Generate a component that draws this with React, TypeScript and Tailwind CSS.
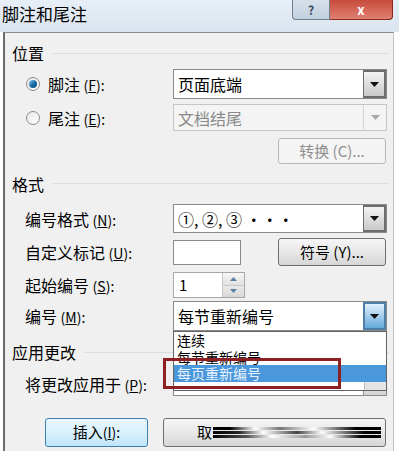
import React from "react";

const font = {
  fontFamily: '"Noto Sans CJK SC", "Noto Sans", sans-serif',
};

const Key = ({ k }: { k: string }) => (
  <span className="text-[14px]">
    (<span className="underline">{k}</span>):
  </span>
);

const Arrow = ({ disabled, dark }: { disabled?: boolean; dark?: boolean }) => (
  <div
    className={
      "flex h-full w-[23px] items-center justify-center border-l " +
      (disabled
        ? "border-[#d5d5d5] bg-[#f4f4f4]"
        : dark
        ? "border-[2px] border-[#6d6d6d] bg-gradient-to-b from-[#f4f4f4] to-[#c9c9c9]"
        : "border-[#9a9a9a] bg-gradient-to-b from-[#f2f2f2] to-[#d4d4d4]")
    }
  >
    <svg width="9" height="5" viewBox="0 0 9 5">
      <path d="M0 0h9L4.5 5z" fill={disabled ? "#a8a8a8" : "#111"} />
    </svg>
  </div>
);

const Select = ({
  value,
  disabled,
  dark,
  focus,
}: {
  value: string;
  disabled?: boolean;
  dark?: boolean;
  focus?: boolean;
}) => (
  <div
    className={
      "flex h-full w-[214px] items-stretch border " +
      (disabled ? "border-[#c5c5c5] bg-[#f4f4f4] text-[#8a8a8a]" : "border-[#8a8a8a] bg-white text-black")
    }
  >
    <div className="flex flex-1 items-center pl-[4px] text-[16px]">{value}</div>
    {focus ? (
      <div className="flex h-full w-[23px] items-center justify-center border-[2px] border-[#4f7fa6] bg-gradient-to-b from-[#e2f1fb] to-[#63a9db]">
        <svg width="9" height="5" viewBox="0 0 9 5">
          <path d="M0 0h9L4.5 5z" fill="#111" />
        </svg>
      </div>
    ) : (
      <Arrow disabled={disabled} dark={dark} />
    )}
  </div>
);

const Btn = ({
  children,
  disabled,
  className = "",
}: {
  children: React.ReactNode;
  disabled?: boolean;
  className?: string;
}) => (
  <div
    className={
      "flex items-center justify-center rounded-[3px] border text-[15px] " +
      (disabled
        ? "border-[#b5b9bc] bg-[#f4f4f4] text-[#8f8f8f] "
        : "border-[#707070] bg-gradient-to-b from-[#f6f6f6] via-[#e8e8e8] to-[#d6d6d6] text-black ") +
      className
    }
  >
    {children}
  </div>
);

const Group = ({ title, className = "" }: { title: string; className?: string }) => (
  <div className={"flex items-center pl-[7px] text-[16px] " + className}>
    <span>{title}</span>
    <div className="ml-[9px] mr-[4px] h-px flex-1 bg-[#d8dde2]" />
  </div>
);

const Radio = ({ on }: { on?: boolean }) => (
  <div className="flex h-[14px] w-[14px] items-center justify-center rounded-full border border-[#8b8b8b] bg-gradient-to-br from-[#e8e8e8] to-[#ffffff]">
    {on && <div className="h-[8px] w-[8px] rounded-full bg-gradient-to-br from-[#8cd0f6] via-[#1a6fa8] to-[#0d4a78]" />}
  </div>
);

export default function App() {
  return (
    <div className="relative flex h-[451px] w-[399px] flex-col overflow-hidden bg-white text-black" style={font}>
      <div className="flex h-[32px] shrink-0 justify-between bg-gradient-to-b from-[#e6eef6] to-[#dbe5ef]">
        <div className="pl-[2px] pt-[1px] text-[17px]">脚注和尾注</div>
        <div className="mr-[6px] flex h-[20px]">
          <div className="flex w-[38px] items-center justify-center rounded-bl-[4px] border border-t-0 border-[#6f7f8f] bg-gradient-to-b from-[#d6e0ea] to-[#c2d0de] text-[12px] font-bold leading-[14px] text-[#3a4a5a]">
            ?
          </div>
          <div className="flex w-[63px] items-center justify-center rounded-br-[4px] border border-l-0 border-t-0 border-[#8a2a22] bg-gradient-to-b from-[#c84a3c] to-[#e08070] text-[13px] font-bold leading-[14px] text-white">
            x
          </div>
        </div>
      </div>

      <div className="ml-[3px] flex w-[391px] flex-1 flex-col border-l-2 border-r border-t border-l-[#6b6b6b] border-r-[#c0c6cc] border-t-[#8c8c8c] bg-[#f0f0f0]">
        <Group title="位置" className="mt-[9px] h-[22px]" />

        <div className="mt-[5px] flex h-[30px] items-center">
          <div className="flex w-[168px] items-center pl-[21px] text-[16px]">
            <Radio on />
            <span className="ml-[8px]">
              脚注 <Key k="F" />
            </span>
          </div>
          <Select value="页面底端" dark />
        </div>

        <div className="mt-[5px] flex h-[27px] items-center">
          <div className="flex w-[168px] items-center pl-[21px] text-[16px]">
            <Radio />
            <span className="ml-[8px]">
              尾注 <Key k="E" />
            </span>
          </div>
          <Select value="文档结尾" disabled />
        </div>

        <div className="mt-[7px] flex h-[26px] justify-end pr-[7px]">
          <Btn disabled className="w-[108px]">
            转换 (C)...
          </Btn>
        </div>

        <Group title="格式" className="mt-[9px] h-[21px]" />

        <div className="mt-[10px] flex h-[29px] items-center">
          <div className="w-[168px] pl-[20px] text-[16px]">
            编号格式 <Key k="N" />
          </div>
          <Select value="①, ②, ③ ···" dark />
        </div>

        <div className="mt-[5px] flex h-[28px] items-center">
          <div className="w-[168px] pl-[20px] text-[16px]">
            自定义标记 <Key k="U" />
          </div>
          <div className="h-[25px] w-[68px] border border-[#8a8a8a] bg-white" />
          <Btn className="ml-[37px] h-[28px] w-[108px]">符号 (Y)...</Btn>
        </div>

        <div className="mt-[6px] flex h-[26px] items-center">
          <div className="w-[168px] pl-[20px] text-[16px]">
            起始编号 <Key k="S" />
          </div>
          <div className="flex h-full w-[72px] border border-[#a8a8a8] bg-white">
            <div className="flex flex-1 items-center pl-[5px] text-[15px]">1</div>
            <div className="flex w-[22px] flex-col border-l border-[#c8c8c8]">
              <div className="flex flex-1 items-center justify-center border-b border-[#c8c8c8] bg-gradient-to-b from-[#f6f6f6] to-[#e2e2e2]">
                <svg width="7" height="4" viewBox="0 0 7 4">
                  <path d="M0 4h7L3.5 0z" fill="#5a7fa3" />
                </svg>
              </div>
              <div className="flex flex-1 items-center justify-center bg-gradient-to-b from-[#eaeaea] to-[#d8d8d8]">
                <svg width="7" height="4" viewBox="0 0 7 4">
                  <path d="M0 0h7L3.5 4z" fill="#5a7fa3" />
                </svg>
              </div>
            </div>
          </div>
        </div>

        <div className="relative mt-[3px] flex h-[30px] items-center">
          <div className="w-[168px] pl-[20px] text-[16px]">
            编号 <Key k="M" />
          </div>
          <Select value="每节重新编号" focus />

          <div className="absolute left-[168px] top-[30px] z-10 flex w-[214px] flex-col border border-[#646464] bg-white text-[14px] leading-[16px]">
            <div className="h-[17px] pl-[3px]">连续</div>
            <div className="h-[16px] pl-[3px]">每节重新编号</div>
            <div className="h-[17px] bg-[#4a97dc] pl-[3px] text-[#e6f2ff]">每页重新编号</div>
            <div className="flex h-[8px] justify-end overflow-hidden bg-white">
              <div className="h-full w-[22px] border-l border-[#bcbcbc] bg-[#e4e4e4]" />
            </div>
          </div>
          <div className="absolute left-[158px] top-[57px] z-20 h-[31px] w-[178px] border-[3px] border-[#8e1f22]" />
        </div>

        <Group title="应用更改" className="mt-[10px] h-[22px]" />

        <div className="mt-[8px] flex h-[25px] items-center">
          <div className="w-[168px] pl-[20px] text-[16px]">
            将更改应用于 <Key k="P" />
          </div>
          <Select value="" />
        </div>

        <div className="mt-[22px] flex h-[29px] items-center">
          <div className="ml-[40px] flex h-full w-[103px] items-center justify-center rounded-[3px] border border-[#3c7fb1] bg-gradient-to-b from-[#eaf6fd] via-[#d9f0fc] to-[#bee6fd] text-[15px]">
            插入 <Key k="I" />
          </div>
          <Btn className="ml-[15px] h-full w-[223px] !justify-start pl-[33px]">
            <span>取</span>
            <div className="ml-[1px] flex h-[14px] flex-1 flex-col justify-center gap-[1px] pr-[4px]">
              <div className="h-[3px] bg-[linear-gradient(90deg,#000_0%,#000_10%,#fff_25%,#777_40%,#fff_60%,#000_85%,#000_100%)]" />
              <div className="h-[3px] bg-[linear-gradient(90deg,#000_0%,#222_15%,#fff_30%,#444_50%,#fff_65%,#000_90%,#000_100%)]" />
              <div className="h-[3px] bg-[linear-gradient(90deg,#000_0%,#555_20%,#fff_35%,#999_55%,#fff_70%,#000_88%,#000_100%)]" />
            </div>
          </Btn>
        </div>
      </div>
    </div>
  );
}
